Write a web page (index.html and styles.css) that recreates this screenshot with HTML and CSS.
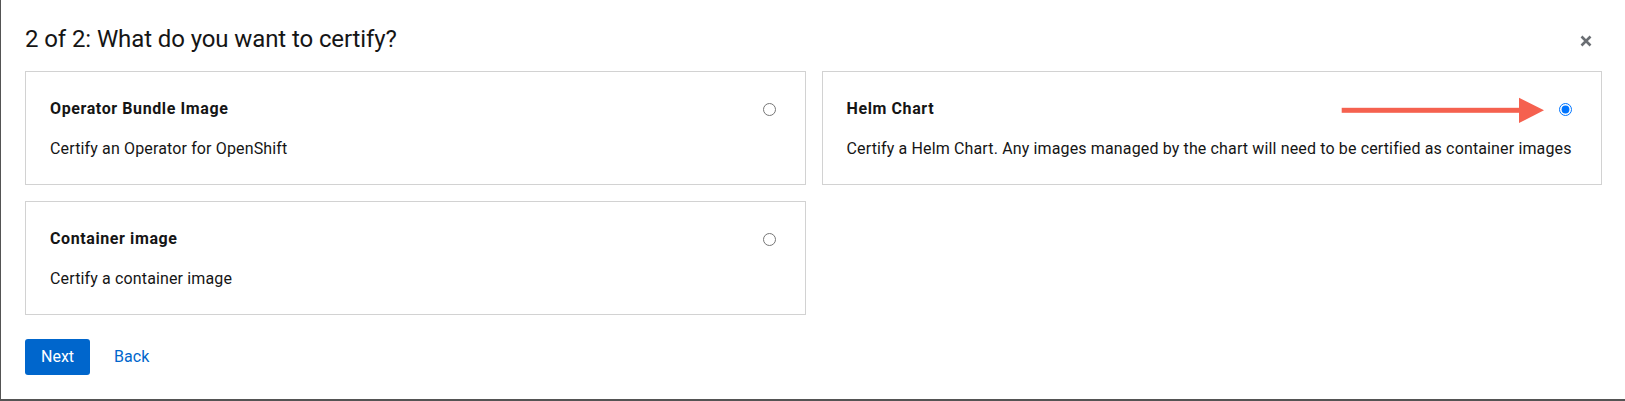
FILE: index.html
```html
<!DOCTYPE html>
<html lang="en">
<head>
<meta charset="utf-8">
<title>What do you want to certify?</title>
<link rel="stylesheet" href="styles.css">
</head>
<body>
<div class="frame">
  <div class="modal">
    <header class="modal-header">
      <h1 class="modal-title">2 of 2: What do you want to certify?</h1>
      <button class="close" aria-label="Close">
        <svg width="12" height="12" viewBox="0 0 12 12"><path d="M1.5 1.5 L10.5 10.5 M10.5 1.5 L1.5 10.5" stroke="#6a6e73" stroke-width="2.6" stroke-linecap="butt"/></svg>
      </button>
    </header>
    <div class="tiles">
      <label class="tile">
        <div class="tile-head">
          <span class="tile-title">Operator Bundle Image</span>
          <input class="radio" type="radio" name="kind" value="operator">
        </div>
        <p class="tile-desc">Certify an Operator for OpenShift</p>
      </label>
      <label class="tile tile-annotated">
        <div class="tile-head">
          <span class="tile-title">Helm Chart</span>
          <input class="radio" type="radio" name="kind" value="helm" checked>
        </div>
        <p class="tile-desc">Certify a Helm Chart. Any images managed by the chart will need to be certified as container images</p>
        <svg class="arrow" width="204" height="27" viewBox="0 0 204 27"><rect x="0.7" y="10.8" width="178" height="5" fill="#f5614f"/><polygon points="178,0.7 203,13.3 178,26" fill="#f5614f"/></svg>
      </label>
      <label class="tile">
        <div class="tile-head">
          <span class="tile-title">Container image</span>
          <input class="radio" type="radio" name="kind" value="container">
        </div>
        <p class="tile-desc">Certify a container image</p>
      </label>
    </div>
    <footer class="actions">
      <button class="btn btn-primary">Next</button>
      <button class="btn btn-link">Back</button>
    </footer>
  </div>
</div>
</body>
</html>
```

FILE: styles.css
```css
* { box-sizing: border-box; }
html, body { margin: 0; padding: 0; background: #fff; }
body {
  font-family: Roboto, "Liberation Sans", Arial, sans-serif;
  color: #151515;
  font-size: 16px;
  line-height: 24px;
}
.frame {
  width: 1625px;
  height: 401px;
  border-left: 1px solid #545454;
  border-bottom: 2px solid #545454;
  overflow: hidden;
}
.modal {
  padding: 24px 23px 0 24px;
}
.modal-header {
  display: flex;
  align-items: center;
  justify-content: space-between;
  height: 31px;
  margin-bottom: 16px;
}
.modal-title {
  margin: 0;
  font-size: 24px;
  font-weight: 400;
  line-height: 31px;
  letter-spacing: -0.1px;
}
.close {
  width: 32px;
  height: 32px;
  padding: 0;
  border: 0;
  background: transparent;
  display: flex;
  align-items: center;
  justify-content: center;
  margin-top: 2px;
}
.tiles {
  display: grid;
  grid-template-columns: 1fr 1fr;
  gap: 16px;
}
.tile {
  position: relative;
  display: block;
  border: 1px solid #d2d2d2;
  padding: 25px 24px 23px;
  height: 114px;
}
.tile-head {
  display: flex;
  align-items: center;
  justify-content: space-between;
  height: 24px;
}
.tile-title {
  font-weight: 700;
  letter-spacing: 0.6px;
}
.radio {
  width: 13px;
  height: 13px;
  margin: 0 5px 0 0;
}
.tile-desc {
  margin: 16px 0 0;
  white-space: nowrap;
  letter-spacing: 0.14px;
}
.arrow {
  position: absolute;
  left: 518px;
  top: 25px;
}
.actions {
  display: flex;
  gap: 8px;
  margin-top: 24px;
}
.btn {
  font-family: inherit;
  font-size: 16px;
  line-height: 24px;
  padding: 6px 16px;
  border: 0;
  border-radius: 3px;
  height: 36px;
}
.btn-primary {
  background: #0066cc;
  color: #fff;
}
.btn-link {
  background: transparent;
  color: #0066cc;
}
```
